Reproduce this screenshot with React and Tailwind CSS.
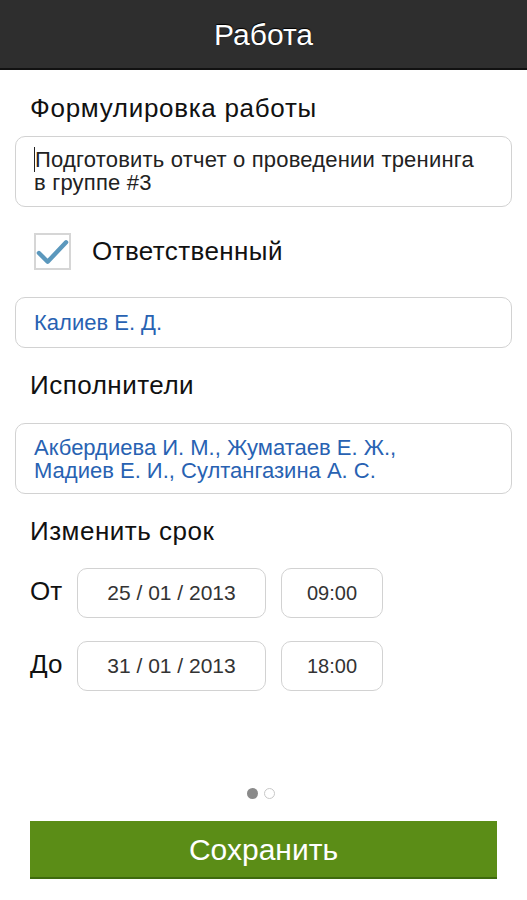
import React from 'react';

const Field = ({ children, className = '' }) => (
  <div className={`mx-[15px] rounded-[10px] border border-[#d2d2d2] bg-white px-[18px] ${className}`}>
    {children}
  </div>
);

const DateRow = ({ label, date, time }) => (
  <div className="flex items-center h-[50px] pl-[30px]">
    <span className="w-[47px] text-[26px] leading-[26px] text-[#111] -mt-[4px]">{label}</span>
    <div className="flex h-[50px] w-[189px] items-center justify-center rounded-[10px] border border-[#d2d2d2] text-[21px] text-[#333]">
      {date}
    </div>
    <div className="ml-[15px] flex h-[50px] w-[102px] items-center justify-center rounded-[10px] border border-[#d2d2d2] text-[20px] text-[#333]">
      {time}
    </div>
  </div>
);

export default function App() {
  return (
    <div
      className="w-[527px] h-[900px] bg-white flex flex-col"
      style={{ fontFamily: '"Liberation Sans", Arial, sans-serif' }}
    >
      <div className="h-[70px] bg-[#2e2e2e] border-b-2 border-[#111] flex items-center justify-center shrink-0">
        <h1 className="text-[30px] text-white [text-shadow:0_-1px_1px_#000]">Работа</h1>
      </div>

      <div className="pl-[30px] pt-[25px] text-[26px] leading-[26px] tracking-[0.7px] text-[#111]">Формулировка работы</div>

      <Field className="mt-[15px] h-[71px] pt-[11px] text-[22px] leading-[23px] tracking-[0.2px] text-[#222]">
        <span className="border-l border-[#222]">Подготовить отчет о проведении тренинга</span>
        <br />
        в группе #3
      </Field>

      <div className="flex items-center mt-[26px] pl-[34px] h-[37px]">
        <div className="w-[37px] h-[37px] border-2 border-[#d6d6d6] bg-white flex items-center justify-center">
          <svg width="34" height="28" viewBox="0 0 34 28">
            <path d="M3 15 L12 24 L31 4" fill="none" stroke="#5b98bd" strokeWidth="4.5" strokeLinecap="round" strokeLinejoin="round" />
          </svg>
        </div>
        <span className="ml-[21px] text-[26px] tracking-[0.4px] text-[#111]">Ответственный</span>
      </div>

      <Field className="mt-[27px] h-[51px] flex items-center text-[22px] text-[#2862b2]">Калиев Е. Д.</Field>

      <div className="pl-[30px] pt-[24px] text-[26px] leading-[26px] tracking-[0.5px] text-[#111]">Исполнители</div>

      <Field className="mt-[25px] h-[71px] pt-[12px] text-[22px] leading-[23px] text-[#2862b2]">
        Акбердиева И. М., Жуматаев Е. Ж.,
        <br />
        Мадиев Е. И., Султангазина А. С.
      </Field>

      <div className="pl-[30px] pt-[24px] text-[26px] leading-[26px] tracking-[0.5px] text-[#111]">Изменить срок</div>

      <div className="mt-[24px] flex flex-col gap-[23px]">
        <DateRow label="От" date="25 / 01 / 2013" time="09:00" />
        <DateRow label="До" date="31 / 01 / 2013" time="18:00" />
      </div>

      <div className="flex justify-center gap-[6px] mt-[97px] pr-[6px]">
        <span className="w-[11px] h-[11px] rounded-full bg-[#8a8a8a]" />
        <span className="w-[11px] h-[11px] rounded-full border border-[#c8c8c8] bg-white" />
      </div>

      <button className="mx-[30px] mt-[22px] h-[58px] bg-[#5b8d17] border-b-2 border-[#3e6a0e] text-white text-[30px] flex items-center justify-center">
        Сохранить
      </button>
    </div>
  );
}
